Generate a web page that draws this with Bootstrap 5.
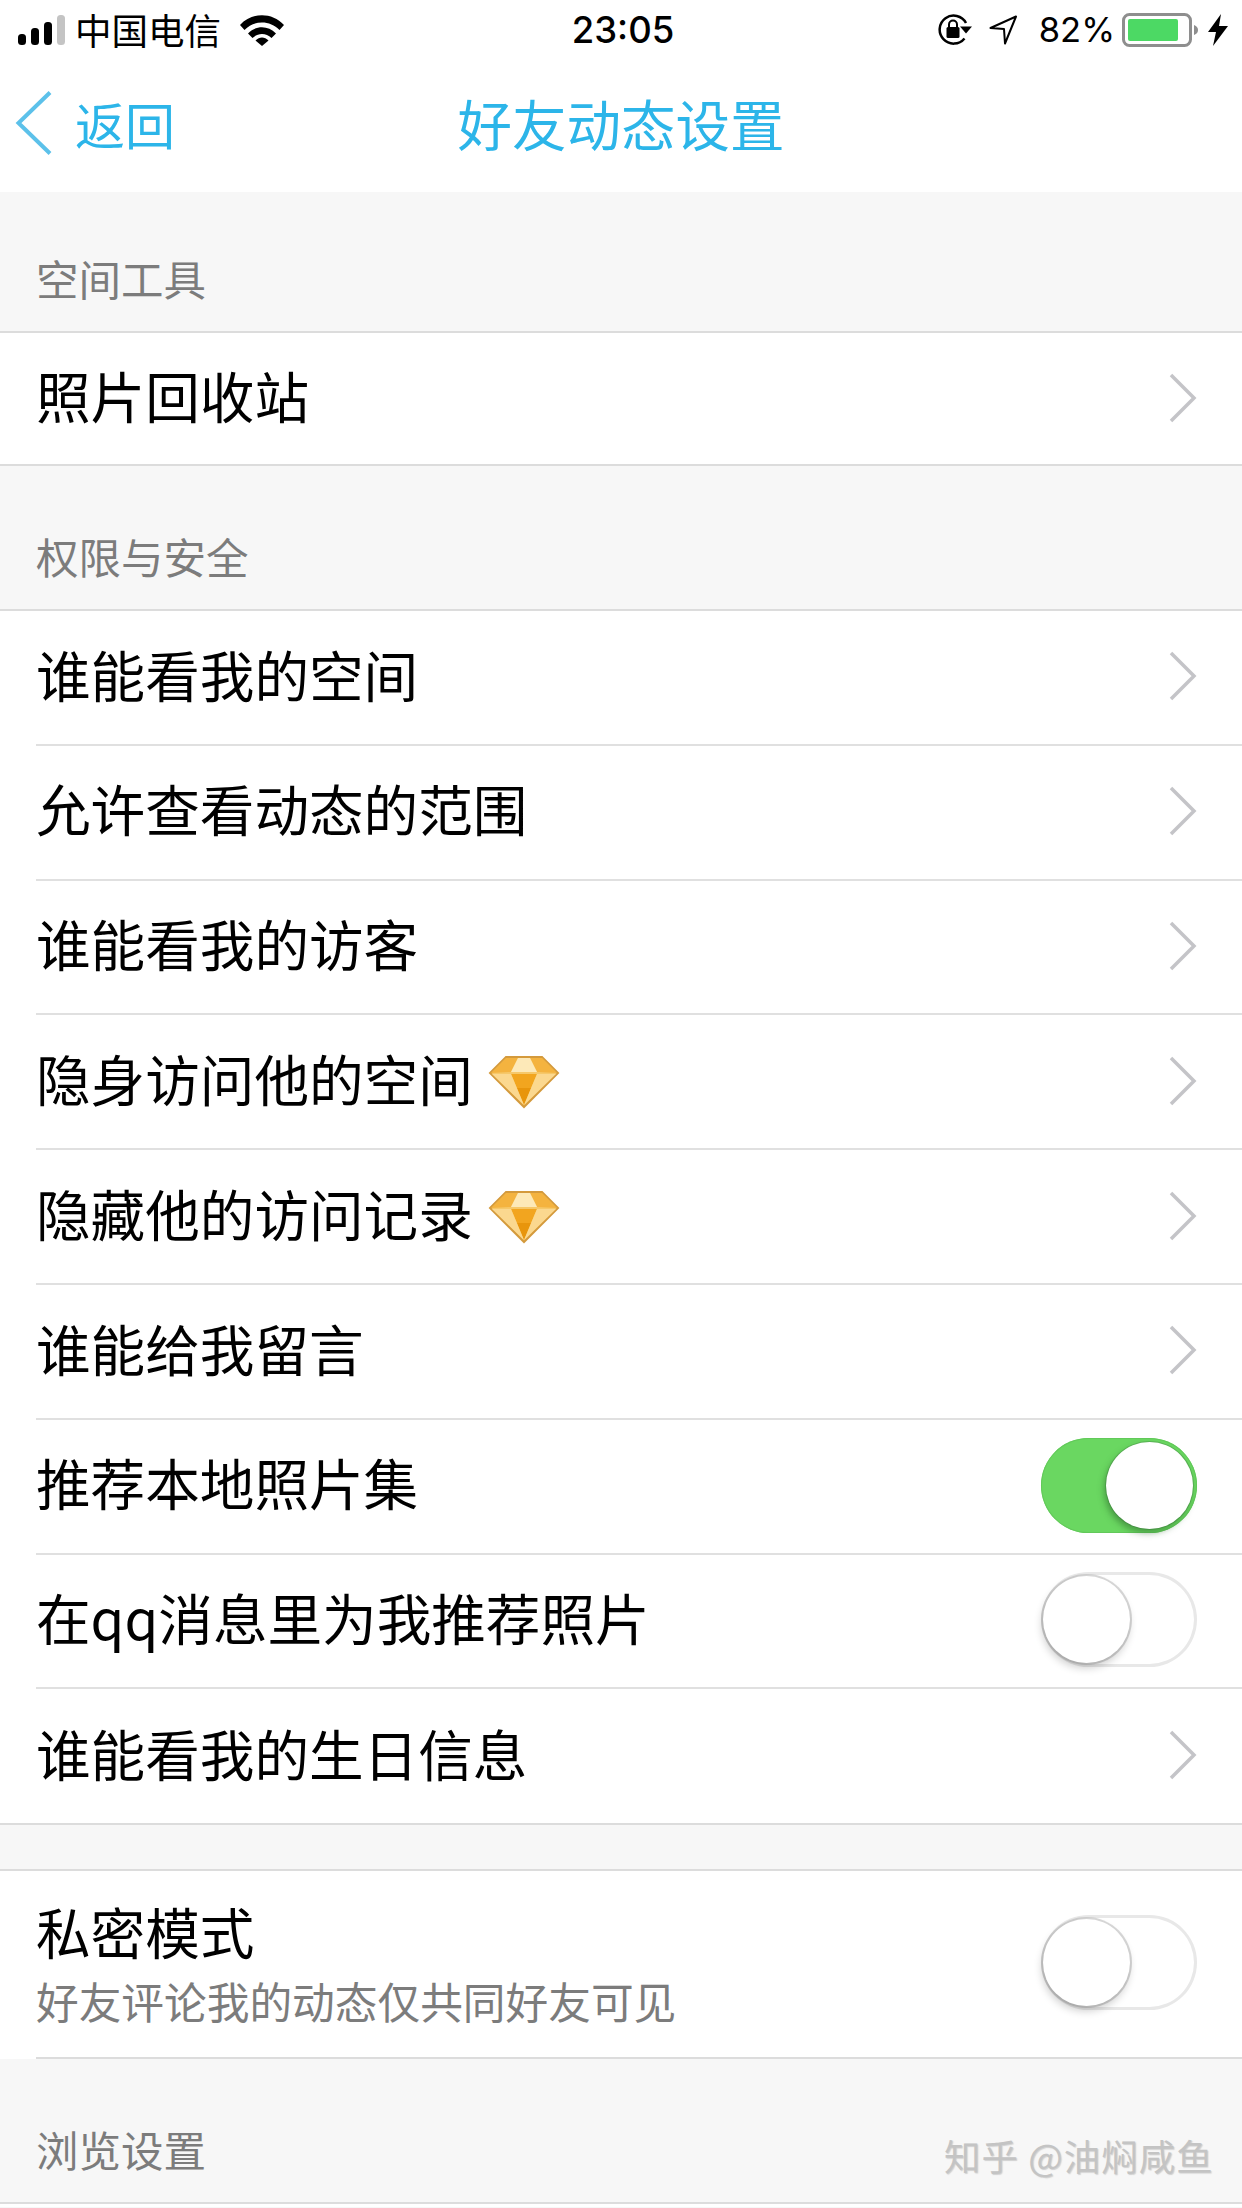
<!DOCTYPE html>
<html lang="zh-CN">
<head>
<meta charset="utf-8">
<title>好友动态设置</title>
<link rel="stylesheet" href="https://cdn.jsdelivr.net/npm/bootstrap@5.3.0/dist/css/bootstrap.min.css">
<style>
html,body{margin:0;background:#f7f7f7;}
body{width:1242px;height:2208px;overflow:hidden;position:relative;font-family:"Noto Sans CJK SC","Liberation Sans",sans-serif;color:#000;}
.st-bar{height:60px;background:#fff;padding:0 14px 0 18px;}
.st-side{flex:1 1 0;}
.st-carrier{font-size:36.5px;line-height:60px;margin:0 19px 0 10px;font-weight:400;}
.st-time{font-family:"Inter","Liberation Sans",sans-serif;font-size:36.5px;font-weight:500;line-height:60px;}
.st-pct{font-family:"Inter","Liberation Sans",sans-serif;font-size:34.5px;line-height:60px;margin:0 7px 0 21px;}
.top-nav{height:132px;background:#fff;padding:0 0 6px 0;}
.nav-side{flex:1 1 0;padding-left:15px;}
.nav-back{font-size:50px;color:#2cb5e9;margin-left:22px;font-weight:400;line-height:1;}
.nav-title{font-size:54.5px;color:#2cb5e9;font-weight:400;line-height:1;}
.sec-head{color:#7c7c7c;font-size:42.5px;line-height:56px;padding:0 0 25px 36px;font-weight:400;}
.sec-first{padding-top:58px;}
.sec-next{padding-top:62px;}
.sec-last{padding-top:62px;}
.sec-gap{height:44px;}
.grp{background:#fff;border-top:2px solid #dcdcdc;border-bottom:2px solid #dcdcdc;padding-left:36px;}
.grp-open{border-bottom:0;}
.cell{height:134.8px;border-bottom:2px solid #e0e0e0;padding:0 45px 2px 0;}
.cell:last-child{border-bottom:0;height:134px;}
.cell.cell-solo{height:131px;}
.cell-tall{height:188px;border-bottom:2px solid #dcdcdc;padding:0 45px 3px 0;}
.cell-text{font-size:54.6px;line-height:1;font-weight:400;margin-bottom:5px;}
.cell-sub{font-size:42.7px;line-height:1;color:#7c7c7c;font-weight:400;margin-top:21px;}
.gem{margin:3px 0 0 15px;display:block;}
.chev{display:block;}
.tgl{width:156px;height:95px;border-radius:48px;position:relative;}
.tgl-on{background:#6ad761;box-shadow:inset 0 0 0 1px #62c95a;}
.tgl-off{background:#fff;box-shadow:inset 0 0 0 3px #e8e8e8;}
.knob{position:absolute;width:87px;height:87px;border-radius:50%;background:#fff;top:4px;}
.tgl-on .knob{right:4px;box-shadow:-2px 4px 6px rgba(40,100,40,.5),0 0 0 1px rgba(70,140,70,.45);}
.tgl-off .knob{left:2px;box-shadow:-1px 5px 8px rgba(0,0,0,.2),0 0 0 2px rgba(180,180,180,.5);}
.wmark{position:absolute;left:944px;top:2134px;font-size:36.5px;line-height:44px;letter-spacing:1px;color:#c4c4c4;font-weight:400;text-shadow:1px 1px 1px rgba(120,120,120,.3);white-space:nowrap;}
.foot-line{height:5px;background:#fff;border-top:2px solid #dcdcdc;}
</style>
</head>
<body>
<div class="st-bar d-flex align-items-center">
  <div class="st-side d-flex align-items-center">
    <svg width="47" height="30" viewBox="0 0 47 30"><rect x="0" y="19" width="8" height="11" rx="3.5" fill="#000"/><rect x="13" y="13" width="8" height="17" rx="3.5" fill="#000"/><rect x="26" y="7" width="8" height="23" rx="3.5" fill="#000"/><rect x="39" y="0" width="8" height="30" rx="3.5" fill="#c4c4c4"/></svg>
    <span class="st-carrier">中国电信</span>
    <svg width="44" height="31" viewBox="0 0 44 31"><path d="M0 10C12-3 32-3 44 10L39.500 15C30 5 14 5 4.500 15Z" fill="#000"/><path d="M8 18.500C16 10 28 10 36 18.500L31.500 23C26 17.500 18 17.500 12.500 23Z" fill="#000"/><path d="M15.500 25.500C19.500 21.500 24.500 21.500 28.500 25.500L22 31Z" fill="#000"/></svg>
  </div>
  <span class="st-time">23:05</span>
  <div class="st-side d-flex align-items-center justify-content-end">
    <svg width="36" height="32" viewBox="0 0 36 32"><path d="M27.500 24.500A14 14 0 1 1 29 9" fill="none" stroke="#000" stroke-width="2.500"/><path d="M23 12.500h12l-6 7z" fill="#000"/><rect x="9.500" y="13" width="13" height="11" rx="1.500" fill="#000"/><path d="M12 13V10.500a4 4 0 0 1 8 0V13" fill="none" stroke="#000" stroke-width="2"/></svg>
    <svg class="ms-3" width="29" height="30" viewBox="0 0 29 30"><path d="M1.500 13L27 1.500 16 28.500 15 14Z" fill="none" stroke="#000" stroke-width="2" stroke-linejoin="round"/></svg>
    <span class="st-pct">82%</span>
    <svg width="78" height="34" viewBox="0 0 78 34"><rect x="1.500" y="1.500" width="67" height="31" rx="6" fill="#fff" stroke="#8e8e8e" stroke-width="3"/><rect x="6" y="6" width="50" height="22" rx="2" fill="#4cd964"/><path d="M72 12c3 1 4 3 4 5s-1 4-4 5z" fill="#8e8e8e"/></svg>
    <svg class="ms-2" width="20" height="32" viewBox="0 0 20 32"><path d="M13 0L0 18H8L5 32 20 12H11Z" fill="#000"/></svg>
  </div>
</div>
<nav class="top-nav d-flex align-items-center">
  <div class="nav-side d-flex align-items-center">
    <svg width="38" height="66" viewBox="0 0 38 66"><path d="M35 2.500L3.500 33 35 63.500" fill="none" stroke="#5cc1ea" stroke-width="4"/></svg>
    <span class="nav-back">返回</span>
  </div>
  <span class="nav-title">好友动态设置</span>
  <div class="nav-side"></div>
</nav>

<div class="sec-head sec-first">空间工具</div>
<div class="grp list-group list-group-flush rounded-0">
  <div class="cell cell-solo d-flex align-items-center justify-content-between"><span class="cell-text">照片回收站</span>
    <svg class="chev" width="28" height="50" viewBox="0 0 28 50"><path d="M2 2L25 25 2 48" fill="none" stroke="#c4c4c8" stroke-width="3.500"/></svg></div>
</div>

<div class="sec-head sec-next">权限与安全</div>
<div class="grp list-group list-group-flush rounded-0">
  <div class="cell d-flex align-items-center justify-content-between"><span class="cell-text">谁能看我的空间</span>
    <svg class="chev" width="28" height="50" viewBox="0 0 28 50"><path d="M2 2L25 25 2 48" fill="none" stroke="#c4c4c8" stroke-width="3.500"/></svg></div>
  <div class="cell d-flex align-items-center justify-content-between"><span class="cell-text">允许查看动态的范围</span>
    <svg class="chev" width="28" height="50" viewBox="0 0 28 50"><path d="M2 2L25 25 2 48" fill="none" stroke="#c4c4c8" stroke-width="3.500"/></svg></div>
  <div class="cell d-flex align-items-center justify-content-between"><span class="cell-text">谁能看我的访客</span>
    <svg class="chev" width="28" height="50" viewBox="0 0 28 50"><path d="M2 2L25 25 2 48" fill="none" stroke="#c4c4c8" stroke-width="3.500"/></svg></div>
  <div class="cell d-flex align-items-center justify-content-between"><span class="d-flex align-items-center"><span class="cell-text">隐身访问他的空间</span>
    <svg class="gem" width="72" height="54" viewBox="0 0 72 54"><polygon points="18,2 54,2 70,18 36,52 2,18" fill="#f6c86a" stroke="#d49a3c" stroke-width="2"/><polygon points="18,3 30,3 23,17 3,18" fill="#f4b33f"/><polygon points="42,3 54,3 69,18 49,17" fill="#f4b33f"/><polygon points="30,3 42,3 49,17 23,17" fill="#fde9b8"/><polygon points="23,19 49,19 36,50" fill="#f2a51f"/><polygon points="29,33 43,33 36,50" fill="#e8950c"/><polygon points="4,19 23,19 36,50" fill="#fbd88f"/><polygon points="49,19 68,19 36,50" fill="#fbd88f"/></svg></span>
    <svg class="chev" width="28" height="50" viewBox="0 0 28 50"><path d="M2 2L25 25 2 48" fill="none" stroke="#c4c4c8" stroke-width="3.500"/></svg></div>
  <div class="cell d-flex align-items-center justify-content-between"><span class="d-flex align-items-center"><span class="cell-text">隐藏他的访问记录</span>
    <svg class="gem" width="72" height="54" viewBox="0 0 72 54"><polygon points="18,2 54,2 70,18 36,52 2,18" fill="#f6c86a" stroke="#d49a3c" stroke-width="2"/><polygon points="18,3 30,3 23,17 3,18" fill="#f4b33f"/><polygon points="42,3 54,3 69,18 49,17" fill="#f4b33f"/><polygon points="30,3 42,3 49,17 23,17" fill="#fde9b8"/><polygon points="23,19 49,19 36,50" fill="#f2a51f"/><polygon points="29,33 43,33 36,50" fill="#e8950c"/><polygon points="4,19 23,19 36,50" fill="#fbd88f"/><polygon points="49,19 68,19 36,50" fill="#fbd88f"/></svg></span>
    <svg class="chev" width="28" height="50" viewBox="0 0 28 50"><path d="M2 2L25 25 2 48" fill="none" stroke="#c4c4c8" stroke-width="3.500"/></svg></div>
  <div class="cell d-flex align-items-center justify-content-between"><span class="cell-text">谁能给我留言</span>
    <svg class="chev" width="28" height="50" viewBox="0 0 28 50"><path d="M2 2L25 25 2 48" fill="none" stroke="#c4c4c8" stroke-width="3.500"/></svg></div>
  <div class="cell d-flex align-items-center justify-content-between"><span class="cell-text">推荐本地照片集</span>
    <div class="tgl tgl-on"><span class="knob"></span></div></div>
  <div class="cell d-flex align-items-center justify-content-between"><span class="cell-text">在qq消息里为我推荐照片</span>
    <div class="tgl tgl-off"><span class="knob"></span></div></div>
  <div class="cell d-flex align-items-center justify-content-between"><span class="cell-text">谁能看我的生日信息</span>
    <svg class="chev" width="28" height="50" viewBox="0 0 28 50"><path d="M2 2L25 25 2 48" fill="none" stroke="#c4c4c8" stroke-width="3.500"/></svg></div>
</div>

<div class="sec-gap"></div>
<div class="grp grp-open list-group list-group-flush rounded-0">
  <div class="cell-tall d-flex align-items-center justify-content-between">
    <div><div class="cell-text">私密模式</div><div class="cell-sub">好友评论我的动态仅共同好友可见</div></div>
    <div class="tgl tgl-off"><span class="knob"></span></div>
  </div>
</div>

<div class="sec-head sec-last">浏览设置</div>
<div class="foot-line"></div>
<div class="wmark">知乎 @油焖咸鱼</div>
</body>
</html>
